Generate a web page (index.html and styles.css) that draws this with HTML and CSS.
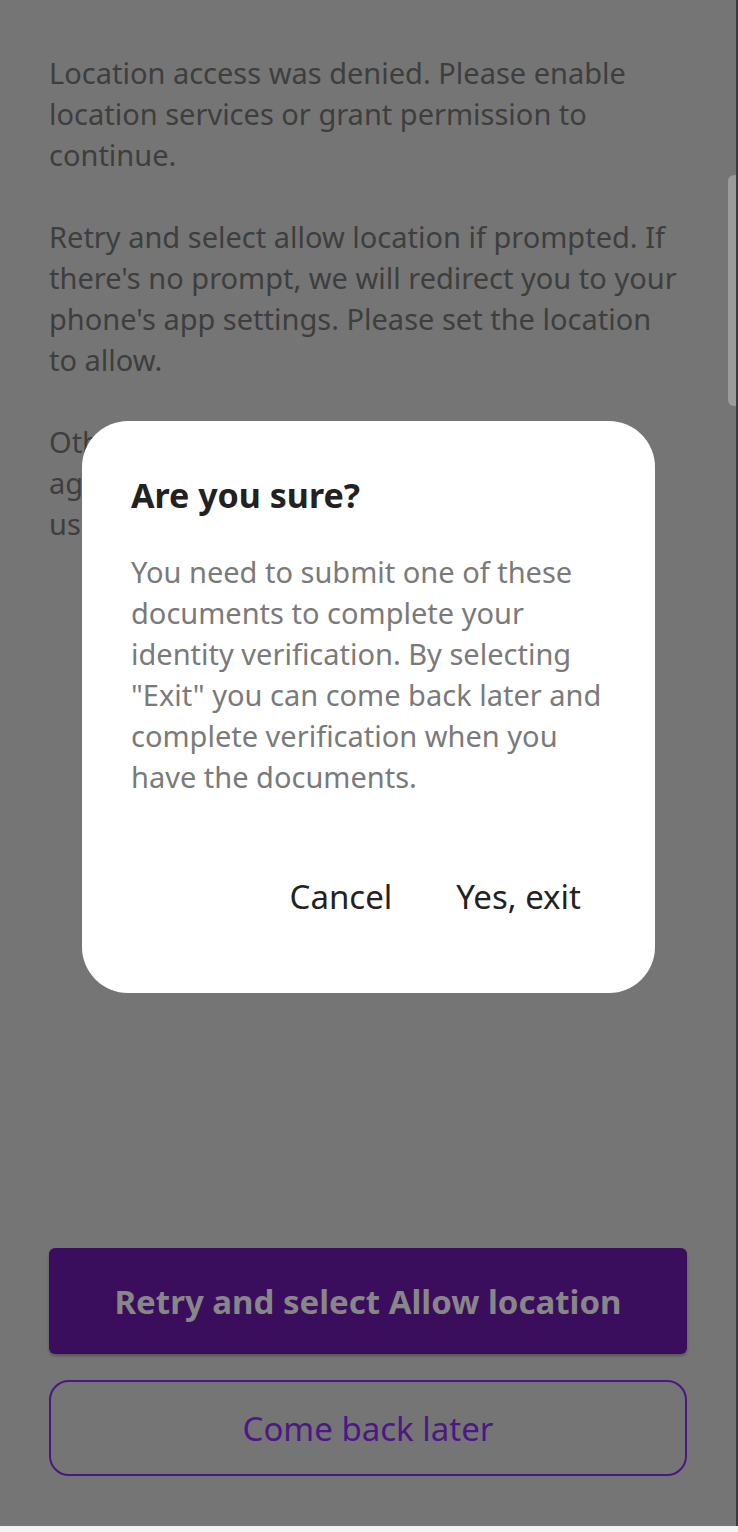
FILE: index.html
```html
<!DOCTYPE html>
<html lang="en">
<head>
<meta charset="utf-8">
<title>Location access denied</title>
<link rel="stylesheet" href="styles.css">
</head>
<body>
<div class="screen">
  <main class="page">
    <div class="content">
      <p>Location access was denied. Please enable location services or grant permission to continue.</p>
      <p>Retry and select allow location if prompted. If there's no prompt, we will redirect you to your phone's app settings. Please set the location to allow.</p>
      <p>Otherwise, you can come back later and try again when location access is allowed for us&nbsp;to&nbsp;continue your verification.</p>
    </div>
    <div class="actions">
      <button class="btn btn-primary" type="button">Retry and select Allow location</button>
      <button class="btn btn-outline" type="button">Come back later</button>
    </div>
  </main>
  <div class="scrollbar"></div>
</div>
<div class="bottom-strip"></div>

<div class="modal" role="dialog" aria-modal="true" aria-labelledby="dlg-title">
  <h2 id="dlg-title" class="modal-title">Are you sure?</h2>
  <p class="modal-text">You need to submit one of these documents to complete your identity verification. By selecting "Exit" you can come back later and complete verification when you have the documents.</p>
  <div class="modal-actions">
    <button class="text-btn" type="button">Cancel</button>
    <button class="text-btn" type="button">Yes, exit</button>
  </div>
</div>
</body>
</html>
```

FILE: styles.css
```css
* { box-sizing: border-box; }

html, body {
  margin: 0;
  padding: 0;
}

body {
  width: 738px;
  height: 1532px;
  overflow: hidden;
  background: #f3f3f6;
  font-family: "Noto Sans", "Open Sans", sans-serif;
}

.screen {
  display: flex;
  height: 1526px;
  background: #757575;
  border-right: 2px solid #3a3a3a;
  position: relative;
}

.page {
  flex: 1;
  display: flex;
  flex-direction: column;
  justify-content: space-between;
  padding: 52px 48px 50px 49px;
}

.content {
  padding-right: 4px;
}

.content p {
  margin: 0 0 41px;
  font-size: 29px;
  line-height: 41px;
  color: #3e3e3e;
}

.actions {
  display: flex;
  flex-direction: column;
  gap: 26px;
}

.btn {
  width: 638px;
  font-family: inherit;
  border-radius: 6px;
  cursor: pointer;
}

.btn-primary {
  height: 106px;
  border: none;
  background: #3b0e5d;
  color: #878787;
  font-size: 33px;
  font-weight: 700;
  box-shadow: 0 2px 3px rgba(0,0,0,0.25);
}

.btn-outline {
  height: 96px;
  border: 2px solid #4a1880;
  border-radius: 20px;
  background: transparent;
  color: #4b1884;
  font-size: 33px;
  font-weight: 400;
}

.scrollbar {
  position: absolute;
  right: 0;
  top: 175px;
  width: 8px;
  height: 231px;
  background: #9b9b9b;
  border-radius: 6px 0 0 6px;
}

.bottom-strip {
  height: 6px;
  background: #f3f3f6;
}

.modal {
  position: absolute;
  left: 82px;
  top: 421px;
  width: 573px;
  height: 572px;
  background: #ffffff;
  border-radius: 46px;
  padding: 54px 40px 0 49px;
  display: flex;
  flex-direction: column;
}

.modal-title {
  margin: 0;
  font-size: 34px;
  line-height: 40px;
  font-weight: 700;
  color: #222222;
}

.modal-text {
  margin: 36px 0 0;
  font-size: 29px;
  line-height: 41px;
  color: #7a7a7a;
}

.modal-actions {
  display: flex;
  justify-content: flex-end;
  gap: 64px;
  margin-top: 78px;
  padding-right: 34px;
}

.text-btn {
  background: none;
  border: none;
  padding: 0;
  font-family: inherit;
  font-size: 33px;
  line-height: 44px;
  color: #222222;
  cursor: pointer;
}
```
